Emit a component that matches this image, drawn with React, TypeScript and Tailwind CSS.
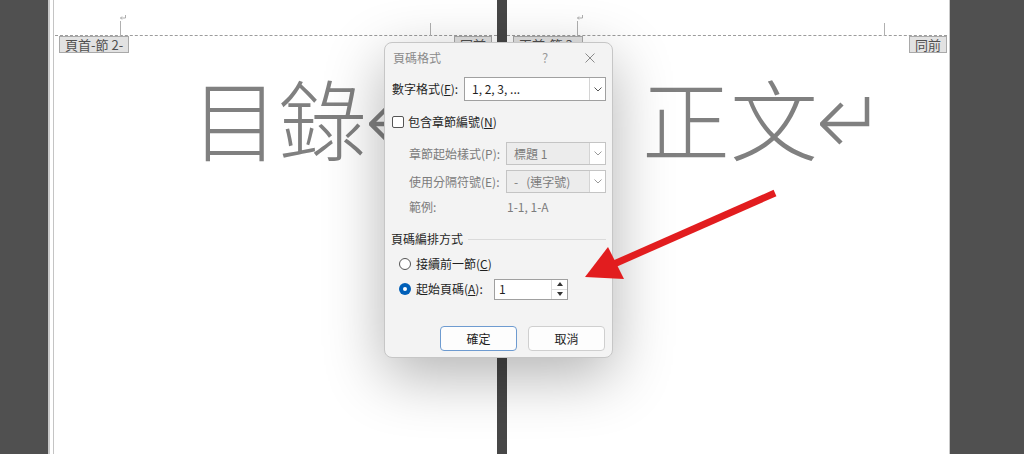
import React from 'react';

const cjk = '"Noto Sans CJK TC", "Noto Sans", sans-serif';

// Word paragraph mark drawn as a bent arrow
function ReturnMark({ className }: { className?: string }) {
  return (
    <svg viewBox="0 0 50 48" className={className} fill="none" stroke="#808080" strokeWidth="4.5">
      <path d="M47 0 V27 H2" />
      <path d="M22 7 L2 27 L21 46" />
    </svg>
  );
}

function TinyMark({ className }: { className?: string }) {
  return (
    <svg viewBox="0 0 6 5" className={className} fill="none" stroke="#9a9a9a" strokeWidth="0.8">
      <path d="M5.5 0 V3 H0.5 M2 1.5 L0.5 3 L2 4.5" />
    </svg>
  );
}

function HeaderTag({ children }: { children: React.ReactNode }) {
  return (
    <div className="h-[17px] px-[5px] flex items-center bg-[#e2e2e2] border border-[#a9a9a9] text-[13px] text-[#505050] leading-none">
      {children}
    </div>
  );
}

function Chevron({ color = '#555' }: { color?: string }) {
  return (
    <svg viewBox="0 0 8 5" className="w-[8px] h-[5px]" fill="none" stroke={color} strokeWidth="1">
      <path d="M0.5 0.5 L4 4 L7.5 0.5" />
    </svg>
  );
}

function SelectBox({ value, disabled, className }: { value: string; disabled?: boolean; className: string }) {
  return (
    <div
      className={`flex items-stretch border ${
        disabled ? 'bg-[#ececec] border-[#c4c4c4] text-[#7c7c7c]' : 'bg-white border-[#a0a0a0] text-[#1f1f1f]'
      } ${className}`}
    >
      <div className="flex-1 flex items-center pl-[7px] whitespace-pre">{value}</div>
      <div className="w-[16px] flex items-center justify-center bg-white border-l border-[#d4d4d4]">
        <Chevron color={disabled ? '#9a9a9a' : '#555'} />
      </div>
    </div>
  );
}

function PageFormatDialog() {
  return (
    <div
      className="absolute left-[384px] top-[42px] w-[229px] h-[316px] rounded-[8px] bg-[#f3f3f3] border border-[#c6c6c6] shadow-[0_18px_60px_rgba(0,0,0,0.3)] text-[12px] text-[#1f1f1f]"
      style={{ fontFamily: cjk }}
    >
      {/* title bar */}
      <div className="h-[29px] flex items-center pl-[8px] pr-[14px]">
        <span className="text-[#8a8a8a]">頁碼格式</span>
        <span className="ml-auto w-[16px] text-center text-[#9a9a9a] text-[13px]">?</span>
        <span className="ml-[29px] w-[16px] flex justify-center">
          <svg viewBox="0 0 10 10" className="w-[10px] h-[10px]" fill="none" stroke="#8a8a8a" strokeWidth="1">
            <path d="M0.5 0.5 L9.5 9.5 M9.5 0.5 L0.5 9.5" />
          </svg>
        </span>
      </div>

      <div className="mt-[5px] h-[24px] flex items-center pl-[7px] pr-[6px]">
        <span className="flex-1">
          數字格式(<u>F</u>):
        </span>
        <SelectBox value="1, 2, 3, ..." className="w-[142px] h-[24px]" />
      </div>

      <div className="mt-[9px] h-[24px] flex items-center pl-[7px]">
        <div className="w-[12px] h-[12px] rounded-[2px] border border-[#555] bg-white" />
        <span className="ml-[4px]">
          包含章節編號(<u>N</u>)
        </span>
      </div>

      <div className="mt-[8px] h-[23px] flex items-center pl-[24px] pr-[6px] text-[#7c7c7c]">
        <span className="flex-1">章節起始樣式(P):</span>
        <SelectBox value="標題 1" disabled className="w-[100px] h-[23px]" />
      </div>

      <div className="mt-[5px] h-[23px] flex items-center pl-[24px] pr-[6px] text-[#7c7c7c]">
        <span className="flex-1">使用分隔符號(E):</span>
        <SelectBox value="-   (連字號)" disabled className="w-[100px] h-[23px]" />
      </div>

      <div className="mt-[4px] h-[20px] flex items-center pl-[24px] text-[#7c7c7c]">
        <span className="w-[98px]">範例:</span>
        <span>1-1, 1-A</span>
      </div>

      <div className="mt-[12px] h-[20px] flex items-center pl-[6px] pr-[6px]">
        <span>頁碼編排方式</span>
        <div className="flex-1 ml-[5px] h-px bg-[#dadada]" />
      </div>

      <div className="mt-[5px] h-[20px] flex items-center pl-[14px]">
        <div className="w-[12px] h-[12px] rounded-full border border-[#555] bg-white" />
        <span className="ml-[5px]">
          接續前一節(<u>C</u>)
        </span>
      </div>

      <div className="mt-[4px] h-[22px] flex items-center pl-[14px]">
        <div className="w-[12px] h-[12px] rounded-full bg-[#005fb8] flex items-center justify-center">
          <div className="w-[4px] h-[4px] rounded-full bg-white" />
        </div>
        <span className="ml-[5px] w-[78px]">
          起始頁碼(<u>A</u>):
        </span>
        <div className="w-[74px] h-[21px] flex border border-[#a0a0a0] bg-white">
          <div className="flex-1 flex items-center pl-[4px]">1</div>
          <div className="w-[16px] flex flex-col border-l border-[#dcdcdc]">
            <div className="flex-1 flex items-center justify-center border-b border-[#dcdcdc]">
              <svg viewBox="0 0 6 4" className="w-[6px] h-[4px]" fill="#333">
                <path d="M0 4 L3 0 L6 4 Z" />
              </svg>
            </div>
            <div className="flex-1 flex items-center justify-center">
              <svg viewBox="0 0 6 4" className="w-[6px] h-[4px]" fill="#333">
                <path d="M0 0 L3 4 L6 0 Z" />
              </svg>
            </div>
          </div>
        </div>
      </div>

      <div className="mt-[26px] flex pl-[55px] gap-[11px]">
        <button className="w-[77px] h-[25px] rounded-[4px] bg-[#fdfdfd] border border-[#6e9bd0] text-[#1f1f1f]">確定</button>
        <button className="w-[77px] h-[25px] rounded-[4px] bg-[#fdfdfd] border border-[#cfcfcf] text-[#1f1f1f]">取消</button>
      </div>
    </div>
  );
}

function RedArrow() {
  return (
    <svg viewBox="0 0 220 110" className="absolute left-[570px] top-[180px] w-[220px] h-[110px]">
      <path d="M205 13 L44 84" stroke="#e21d1f" strokeWidth="7" fill="none" />
      <path d="M15 97 L38 67 L54 99 Z" fill="#e21d1f" />
    </svg>
  );
}

export default function App() {
  return (
    <div className="relative w-[1024px] h-[454px] overflow-hidden bg-[#505050] flex" style={{ fontFamily: cjk }}>
      <div className="w-[48px] shrink-0" />

      {/* left page */}
      <div className="relative w-[449px] shrink-0 bg-white border-l-2 border-[#c9c9c9]">
        <div className="absolute left-[3px] top-0 bottom-0 w-px bg-[#c4c4c4]" />
        <TinyMark className="absolute left-[70px] top-[15px] w-[6px] h-[5px]" />
        <div className="absolute left-[70px] top-[21px] w-px h-[15px] bg-[#b0b0b0]" />
        <div className="absolute left-[380px] top-[23px] w-px h-[13px] bg-[#b0b0b0]" />
        <div className="h-[36px] ml-[5px] border-b border-dashed border-[#9c9c9c]" />
        <div className="flex justify-between pl-[9px] pr-[5px]">
          <HeaderTag>頁首-節 2-</HeaderTag>
          <HeaderTag>同前</HeaderTag>
        </div>
        <div className="mt-[19px] pl-[141px] flex items-start text-[88px] leading-[88px] font-light text-[#808080]">
          <span>目錄</span>
          <ReturnMark className="ml-[2px] mt-[25px] w-[50px] h-[48px] shrink-0" />
        </div>
      </div>

      {/* divider */}
      <div className="w-[10px] shrink-0 bg-[#474747]" />

      {/* right page */}
      <div className="relative w-[443px] shrink-0 bg-white border-r border-[#c9c9c9]">
        <TinyMark className="absolute left-[70px] top-[15px] w-[6px] h-[5px]" />
        <div className="absolute left-[70px] top-[21px] w-px h-[15px] bg-[#b0b0b0]" />
        <div className="absolute left-[377px] top-[23px] w-px h-[13px] bg-[#b0b0b0]" />
        <div className="h-[36px] mr-[2px] border-b border-dashed border-[#9c9c9c]" />
        <div className="flex justify-between pl-[6px] pr-[2px]">
          <HeaderTag>頁首-節 3-</HeaderTag>
          <HeaderTag>同前</HeaderTag>
        </div>
        <div className="mt-[19px] pl-[135px] flex items-start text-[88px] leading-[88px] font-light text-[#808080]">
          <span>正文</span>
          <ReturnMark className="ml-[2px] mt-[25px] w-[50px] h-[48px] shrink-0" />
        </div>
      </div>

      <div className="flex-1" />

      <PageFormatDialog />
      <RedArrow />
    </div>
  );
}
